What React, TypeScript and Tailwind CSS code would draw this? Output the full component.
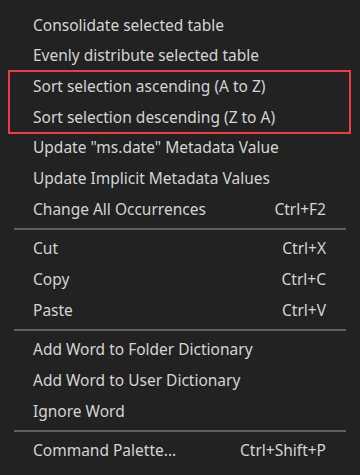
import React from "react";

type Item = { label: string; shortcut?: string };

const Row = ({ label, shortcut }: Item) => (
  <div className="flex h-[30.67px] items-center justify-between pl-[33px] pr-[34px] text-[15.5px] text-[#d4d4d4]">
    <span>{label}</span>
    {shortcut && <span>{shortcut}</span>}
  </div>
);

const Sep = () => (
  <div className="mx-[14px] my-[3.5px] h-[2px] bg-[#5e5e5e]" />
);

export default function App() {
  return (
    <div
      className="h-[475px] w-[360px] bg-[#222222] pt-[10px]"
      style={{ fontFamily: '"Noto Sans", "Open Sans", sans-serif' }}
    >
      <Row label="Consolidate selected table" />
      <Row label="Evenly distribute selected table" />
      <div className="relative">
        <Row label="Sort selection ascending (A to Z)" />
        <Row label="Sort selection descending (Z to A)" />
        <div className="pointer-events-none absolute -top-[1px] -bottom-[1px] left-[8px] right-[9px] border-2 border-[#ee3a40]" />
      </div>
      <Row label='Update "ms.date" Metadata Value' />
      <Row label="Update Implicit Metadata Values" />
      <Row label="Change All Occurrences" shortcut="Ctrl+F2" />
      <Sep />
      <Row label="Cut" shortcut="Ctrl+X" />
      <Row label="Copy" shortcut="Ctrl+C" />
      <Row label="Paste" shortcut="Ctrl+V" />
      <Sep />
      <Row label="Add Word to Folder Dictionary" />
      <Row label="Add Word to User Dictionary" />
      <Row label="Ignore Word" />
      <Sep />
      <Row label="Command Palette..." shortcut="Ctrl+Shift+P" />
    </div>
  );
}
